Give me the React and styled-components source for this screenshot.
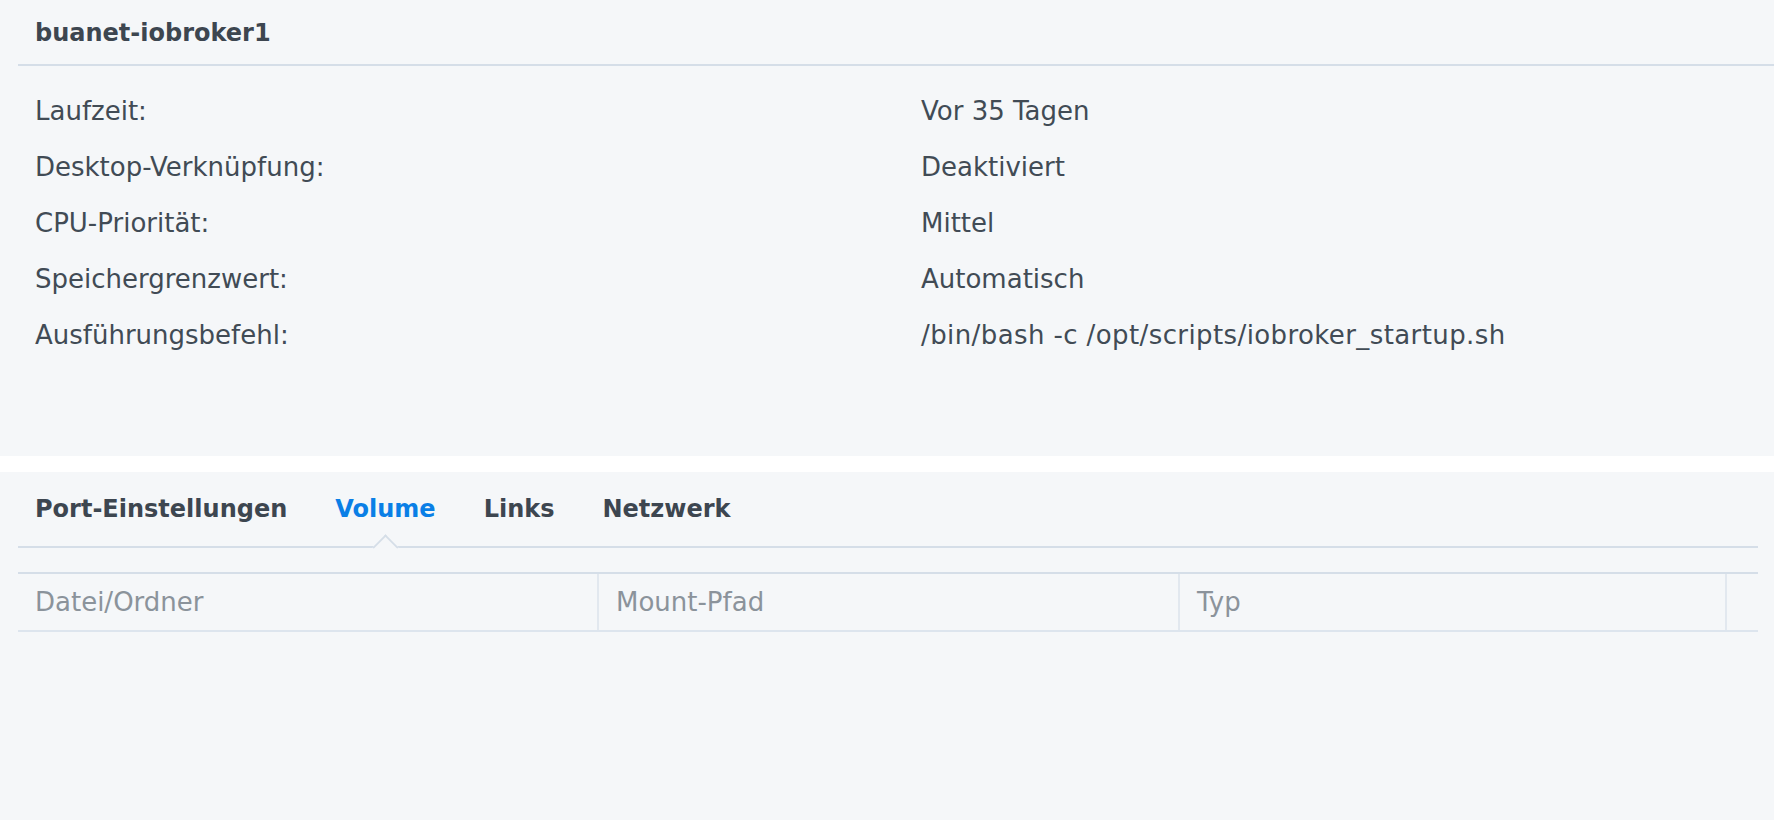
import React from "react";
import styled, { createGlobalStyle } from "styled-components";

const Global = createGlobalStyle`
  html, body { margin: 0; padding: 0; background: #ffffff; }
  body { font-family: "DejaVu Sans", Verdana, sans-serif; color: #414b55; }
`;

const Page = styled.div`
  width: 1774px;
  height: 820px;
  display: flex;
  flex-direction: column;
  background: #ffffff;
  overflow: hidden;
`;

const TopPanel = styled.section`
  height: 456px;
  background: #f5f7f9;
  padding-left: 18px;
  box-sizing: border-box;
`;

const Header = styled.header`
  height: 62px;
  border-bottom: 2px solid #d5dee8;
  display: flex;
  align-items: center;
  padding-left: 17px;
  padding-top: 2px;
  box-sizing: content-box;
`;

const Title = styled.h1`
  margin: 0;
  font-size: 24px;
  font-weight: 700;
  color: #3d4650;
`;

const InfoGrid = styled.dl`
  margin: 0;
  padding: 17px 0 0 17px;
  display: grid;
  grid-template-columns: 886px 1fr;
  grid-auto-rows: 56px;
  align-items: center;
`;

const Label = styled.dt`
  font-size: 26px;
  color: #414b55;
`;

const Value = styled.dd`
  margin: 0;
  font-size: 26px;
  color: #414b55;
  letter-spacing: ${(p) => (p.$long ? "0.4px" : "0")};
`;

const Gap = styled.div`
  height: 16px;
  background: #ffffff;
`;

const BottomPanel = styled.section`
  flex: 1;
  background: #f5f7f9;
  padding: 0 16px 0 18px;
`;

const TabBar = styled.nav`
  height: 74px;
  display: flex;
  align-items: center;
  gap: 48px;
  padding-left: 17px;
  border-bottom: 2px solid #d5dee8;
`;

const Tab = styled.div`
  position: relative;
  height: 100%;
  display: flex;
  align-items: center;
  font-size: 24px;
  font-weight: 700;
  color: ${(p) => (p.$active ? "#0a7fe6" : "#3d4650")};

  ${(p) =>
    p.$active &&
    `
    &::after {
      content: "";
      position: absolute;
      left: 50%;
      bottom: -11px;
      width: 19px;
      height: 19px;
      margin-left: -9.5px;
      background: #f5f7f9;
      border-top: 2px solid #d5dee8;
      border-left: 2px solid #d5dee8;
      transform: rotate(45deg);
      box-sizing: border-box;
      clip-path: polygon(0 0, 100% 0, 100% 8%, 8% 100%, 0 100%);
    }
  `}
`;

const Table = styled.div`
  margin-top: 24px;
  border-top: 2px solid #d5dee8;
  border-bottom: 2px solid #dde5ee;
  display: grid;
  grid-template-columns: 579px 581px 547px 1fr;
  height: 56px;
`;

const HeadCell = styled.div`
  display: flex;
  align-items: center;
  padding-left: 17px;
  border-left: ${(p) => (p.$first ? "none" : "2px solid #e2e8ef")};
  font-size: 26px;
  color: #8b939b;
`;

const rows = [
  ["Laufzeit:", "Vor 35 Tagen"],
  ["Desktop-Verknüpfung:", "Deaktiviert"],
  ["CPU-Priorität:", "Mittel"],
  ["Speichergrenzwert:", "Automatisch"],
  ["Ausführungsbefehl:", "/bin/bash -c /opt/scripts/iobroker_startup.sh", true],
];

const tabs = ["Port-Einstellungen", "Volume", "Links", "Netzwerk"];

export default function App() {
  return (
    <>
      <Global />
      <Page>
        <TopPanel>
          <Header>
            <Title>buanet-iobroker1</Title>
          </Header>
          <InfoGrid>
            {rows.map(([l, v, long]) => (
              <React.Fragment key={l}>
                <Label>{l}</Label>
                <Value $long={long}>{v}</Value>
              </React.Fragment>
            ))}
          </InfoGrid>
        </TopPanel>
        <Gap />
        <BottomPanel>
          <TabBar>
            {tabs.map((t) => (
              <Tab key={t} $active={t === "Volume"}>
                {t}
              </Tab>
            ))}
          </TabBar>
          <Table>
            <HeadCell $first>Datei/Ordner</HeadCell>
            <HeadCell>Mount-Pfad</HeadCell>
            <HeadCell>Typ</HeadCell>
            <HeadCell />
          </Table>
        </BottomPanel>
      </Page>
    </>
  );
}
